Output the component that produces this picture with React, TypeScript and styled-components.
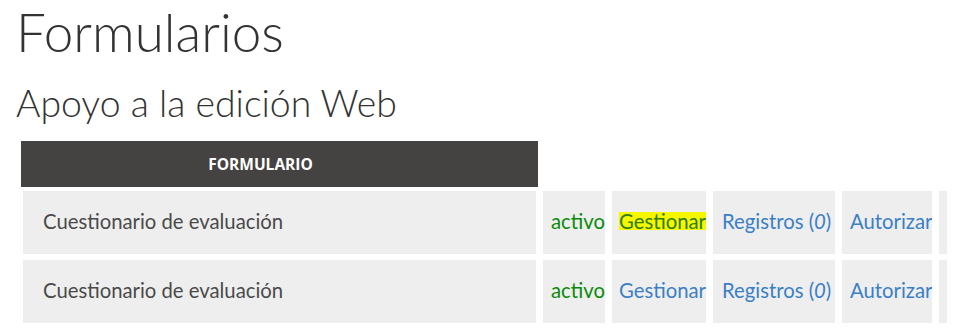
import styled, { createGlobalStyle } from "styled-components";

const GlobalStyle = createGlobalStyle`
  * {
    box-sizing: border-box;
  }
  body {
    margin: 0;
    background: #fff;
    font-family: Lato, "Open Sans", sans-serif;
    color: #444;
  }
`;

const Page = styled.div`
  padding: 0 0 0 16px;
`;

const Title = styled.h1`
  margin: 0;
  font-size: 53px;
  font-weight: 300;
  line-height: 64px;
  color: #333;
`;

const SubTitle = styled.h2`
  margin: 14px 0 0;
  font-size: 37.4px;
  font-weight: 300;
  line-height: 50px;
  color: #333;
`;

const Table = styled.table`
  margin-top: 9px;
  border-collapse: separate;
  border-spacing: 7px 6px;
  table-layout: fixed;
`;

const HeadCell = styled.th<{ $w: number; $dark?: boolean }>`
  width: ${(p) => p.$w}px;
  height: 42px;
  padding: 0 ${(p) => (p.$dark ? 38 : 0)}px 0 0;
  background: ${(p) => (p.$dark ? "#454341" : "transparent")};
  box-shadow: ${(p) => (p.$dark ? "0 0 0 2px #454341" : "none")};
  color: #fff;
  font-family: "Open Sans", sans-serif;
  font-size: 15.5px;
  font-weight: 700;
  text-align: center;
`;

const Cell = styled.td<{ $pad?: number }>`
  height: 63px;
  padding: 0 0 3px ${(p) => p.$pad ?? 8}px;
  background: #eee;
  font-size: 20.3px;
  white-space: nowrap;
  overflow: hidden;
  vertical-align: middle;
  color: #4a4a4a;
`;

const Status = styled.span`
  color: #0a8a0a;
`;

const Link = styled.a<{ $active?: boolean }>`
  display: inline-block;
  line-height: 17px;
  padding-top: 1px;
  text-decoration: none;
  cursor: pointer;
  color: ${(p) => (p.$active ? "#2f7d10" : "#3b7fc4")};
  background: ${(p) => (p.$active ? "#f6f600" : "transparent")};
  i {
    font-style: italic;
  }
`;

const widths = [513, 62, 94, 122, 89, 8];

const rows = [{ active: true }, { active: false }];

export default function App() {
  return (
    <>
      <GlobalStyle />
      <Page>
        <Title>Formularios</Title>
        <SubTitle>Apoyo a la edición Web</SubTitle>
        <Table>
          <thead>
            <tr>
              {widths.map((w, i) => (
                <HeadCell key={i} $w={w} $dark={i === 0}>
                  {i === 0 ? "FORMULARIO" : ""}
                </HeadCell>
              ))}
            </tr>
          </thead>
          <tbody>
            {rows.map((r, i) => (
              <tr key={i}>
                <Cell $pad={20}>Cuestionario de evaluación</Cell>
                <Cell>
                  <Status>activo</Status>
                </Cell>
                <Cell $pad={7}>
                  <Link $active={r.active}>Gestionar</Link>
                </Cell>
                <Cell $pad={9}>
                  <Link>
                    Registros (<i>0</i>)
                  </Link>
                </Cell>
                <Cell>
                  <Link>Autorizar</Link>
                </Cell>
                <Cell />
              </tr>
            ))}
          </tbody>
        </Table>
      </Page>
    </>
  );
}
